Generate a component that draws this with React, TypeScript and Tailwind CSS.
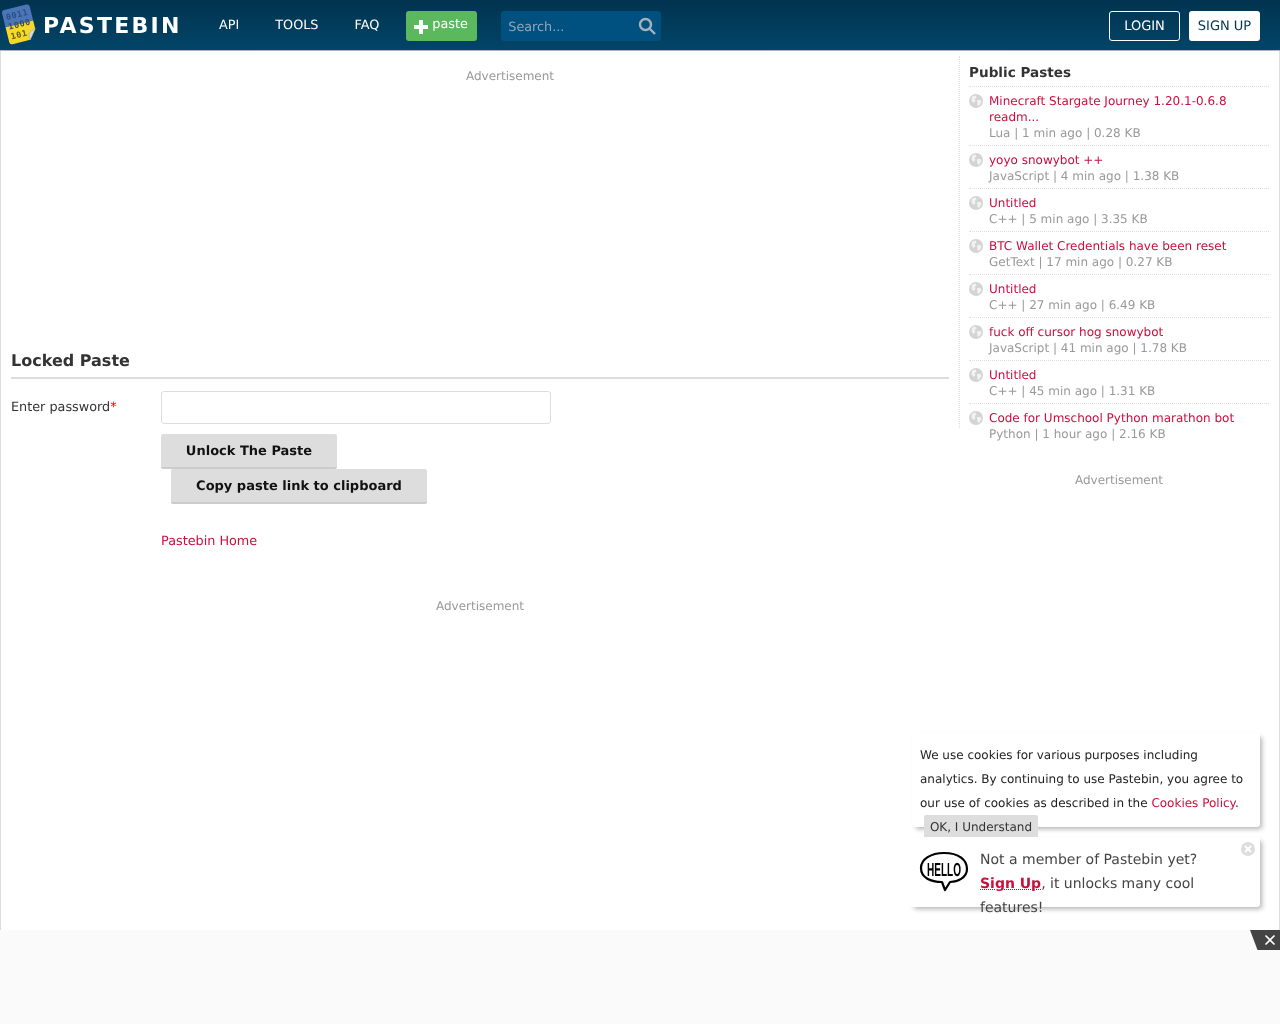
const pastes = [
  { t: "Minecraft Stargate Journey 1.20.1-0.6.8 readm...", m: "Lua | 1 min ago | 0.28 KB" },
  { t: "yoyo snowybot ++", m: "JavaScript | 4 min ago | 1.38 KB" },
  { t: "Untitled", m: "C++ | 5 min ago | 3.35 KB" },
  { t: "BTC Wallet Credentials have been reset", m: "GetText | 17 min ago | 0.27 KB" },
  { t: "Untitled", m: "C++ | 27 min ago | 6.49 KB" },
  { t: "fuck off cursor hog snowybot", m: "JavaScript | 41 min ago | 1.78 KB" },
  { t: "Untitled", m: "C++ | 45 min ago | 1.31 KB" },
  { t: "Code for Umschool Python marathon bot", m: "Python | 1 hour ago | 2.16 KB" },
];

function Logo() {
  return (
    <svg width="40" height="46" viewBox="0 0 40 46" className="shrink-0">
      <g transform="translate(-0.5 -1.5) rotate(-14 20 24) translate(1 1.5) scale(0.95)">
        <path d="M5 8 Q5 5 8 5 L32 5 Q35 5 35 8 L35 23 L5 23 Z" fill="#4a76b8" />
        <path d="M5 23 L35 23 L35 32 L27 42 L8 42 Q5 42 5 39 Z" fill="#f6d826" />
        <path d="M35 32 L27 42 Q25 33 35 32 Z" fill="#d8d8d8" stroke="#aaa" strokeWidth="0.6" />
        <text x="8" y="16" fontSize="9" fontWeight="700" fontFamily="'DejaVu Sans Mono', monospace" fill="#2c4d80" letterSpacing="0.6">0011</text>
        <text x="8" y="26.5" fontSize="9" fontWeight="700" fontFamily="'DejaVu Sans Mono', monospace" fill="#3a4a55" letterSpacing="0.6">1000</text>
        <text x="8" y="37" fontSize="9" fontWeight="700" fontFamily="'DejaVu Sans Mono', monospace" fill="#5a5a20" letterSpacing="0.6">101</text>
      </g>
    </svg>
  );
}

function Globe() {
  return (
    <svg width="14" height="14" viewBox="0 0 14 14" className="shrink-0 mt-[1px]">
      <circle cx="7" cy="7" r="7" fill="#d4d4d4" />
      <path d="M3 2.5 L6.5 1.5 L7.5 3.5 L5.5 5 L6.5 7 L4.5 9 L2.5 6.5 Z M8 6 L11.5 6 L12.5 8 L10 12 L8.5 11 Z" fill="#f2f2f2" />
    </svg>
  );
}

export default function App() {
  return (
    <div className="relative h-[1024px] overflow-hidden text-[12.8px] text-[#333] will-change-transform [text-rendering:geometricPrecision] font-['DejaVu_Sans',sans-serif]">
      <header className="flex h-[51px] items-start border-b border-[#aab4ba] bg-gradient-to-b from-[#02334f] to-[#024568]">
        <div className="flex items-center pt-[1px] w-[188px] h-[48px]">
          <Logo />
          <span className="ml-[3px] mt-[4px] text-[22px] font-bold tracking-[2.3px] text-white leading-none">PASTEBIN</span>
        </div>
        <nav className="flex ml-[31px] gap-[36px] pt-[17px] text-white leading-[18px]">
          <span>API</span>
          <span>TOOLS</span>
          <span>FAQ</span>
        </nav>
        <div className="ml-[27px] mt-[11px] flex h-[30px] w-[71px] items-start gap-[4px] rounded-[3px] bg-[#5cb85c] pl-[8px] pt-[5px] text-white leading-[18px]">
          <svg width="14" height="14" viewBox="0 0 14 14" className="mt-[4px]"><path d="M5 0h4v5h5v4H9v5H5V9H0V5h5z" fill="#fff" /></svg>
          <span>paste</span>
        </div>
        <div className="ml-[24px] mt-[11px] flex h-[30px] w-[160px] items-center justify-between rounded-[3px] bg-[#005180] pl-[7px] pr-[5px] text-[#8fa8bb]">
          <span className="mt-[3px]">Search...</span>
          <svg width="18" height="18" viewBox="0 0 18 18" fill="none" stroke="#a3b3be" strokeWidth="2.4"><circle cx="7.5" cy="7.5" r="5.5" /><path d="M11.5 11.5 L17 17" /></svg>
        </div>
        <div className="ml-auto mr-[20px] mt-[11px] flex gap-[9px] text-[13px]">
          <div className="flex h-[30px] w-[71px] items-center justify-center rounded-[3px] border border-white pt-[2px] text-white">LOGIN</div>
          <div className="flex h-[30px] w-[71px] items-center justify-center rounded-[3px] bg-white pt-[2px] text-[#02334f]">SIGN UP</div>
        </div>
      </header>

      <div className="flex h-[973px] border-x border-[#ddd] pt-[5px]">
        <main className="w-[958px] shrink-0 pl-[10px] pr-[10px]">
          <div className="h-[290px] pl-[60px] pt-[12px] text-center text-[12px] leading-[16px] text-[#999]">Advertisement</div>
          <h1 className="h-[28px] border-b-2 border-[#ddd] text-[16px] font-bold leading-[24px] text-[#333] pt-[3px] box-content pb-0">Locked Paste</h1>
          <div className="mt-[12px] flex">
            <label className="w-[150px] pt-[8px] leading-[18px]">Enter password<span className="text-[#f00]">*</span></label>
            <div>
              <div className="h-[33px] w-[390px] rounded-[3px] border border-[#ddd] bg-white" />
              <div className="mt-[10px] flex h-[35px] w-[176px] items-center justify-center rounded-[2px] border-b-2 border-[#ccc] bg-[#ddd] pt-[2px] text-[13px] font-bold text-[#111]">Unlock The Paste</div>
              <div className="ml-[10px] flex h-[35px] w-[256px] items-center justify-center rounded-[2px] border-b-2 border-[#ccc] bg-[#ddd] pt-[2px] text-[13px] font-bold text-[#111]">Copy paste link to clipboard</div>
              <div className="mt-[29px] leading-[18px] text-[#c8103e]">Pastebin Home</div>
            </div>
          </div>
          <div className="mt-[47px] text-center text-[12px] leading-[16px] text-[#999]">Advertisement</div>
        </main>

        <aside className="relative w-[320px] pl-[10px] pr-[10px]">
          <span className="absolute left-0 top-0 h-[372px] border-l border-dotted border-[#ddd]" />
          <h2 className="h-[31px] pt-[7px] border-b border-dotted border-[#ddd] text-[13.6px] font-bold leading-[20px] text-[#333]">Public Pastes</h2>
          <ul>
            {pastes.map((p, i) => (
              <li key={i} className={`flex gap-[6px] pt-[6px] pb-[4px] text-[12px] leading-[16px] ${i < 7 ? "border-b border-dotted border-[#ddd]" : ""}`}>
                <Globe />
                <div>
                  <div className="text-[#c8103e]">{p.t}</div>
                  <div className="text-[#999]">{p.m}</div>
                </div>
              </li>
            ))}
          </ul>
          <div className="mt-[26px] text-center text-[12px] leading-[16px] text-[#999]">Advertisement</div>
        </aside>
      </div>

      <div className="absolute left-[912px] top-[733px] h-[94px] w-[348px] rounded-[3px] bg-white pl-[8px] pr-[12px] pt-[10px] text-[12px] leading-[24px] text-[#222] shadow-[3px_3px_5px_-1px_rgba(0,0,0,0.3)]">
        We use cookies for various purposes including analytics. By continuing to use Pastebin, you agree to our use of cookies as described in the <span className="text-[#c8103e]">Cookies Policy</span>.
      </div>
      <div className="absolute left-[910px] top-[837px] flex h-[70px] w-[350px] rounded-[3px] bg-white pl-[10px] pt-[11px] text-[14px] leading-[24px] text-[#444] shadow-[3px_3px_5px_-1px_rgba(0,0,0,0.3)]">
        <svg width="50" height="42" viewBox="0 0 50 42" className="shrink-0 mt-[3px] -ml-[1px]">
          <path d="M25 2 C40 2 48 9 48 18 C48 27 38 31 31 31 L26 39 L23 31 C12 31 2 27 2 17 C2 8 12 2 25 2 Z" fill="#fff" stroke="#000" strokeWidth="2.2" strokeLinejoin="round" />
          <text x="25" y="24.5" textAnchor="middle" fontSize="19" fontWeight="700" fontFamily="'Liberation Sans Narrow','Liberation Sans',sans-serif" textLength="34" lengthAdjust="spacingAndGlyphs" fill="#000">HELLO</text>
        </svg>
        <div className="ml-[11px] w-[240px]">
          Not a member of Pastebin yet?<br />
          <span className="font-bold text-[#c8103e] underline decoration-dotted decoration-1">Sign Up</span>, it unlocks many cool features!
        </div>
        <span className="absolute right-[5px] top-[5px] flex h-[14px] w-[14px] items-center justify-center rounded-full bg-[#ddd]">
          <svg width="8" height="8" viewBox="0 0 8 8" stroke="#fff" strokeWidth="2"><path d="M1 1l6 6M7 1L1 7" /></svg>
        </span>
      </div>
      <div className="absolute left-[924px] top-[815px] flex h-[22px] w-[114px] items-center justify-center rounded-t-[2px] bg-[#ddd] pt-[1px] text-[12px] text-[#333]">OK, I Understand</div>

      <div className="absolute inset-x-0 bottom-0 h-[94px] bg-[#fafafa]" />
      <div className="absolute right-0 top-[930px] flex h-[20px] w-[30px] items-center justify-end bg-[#444] pr-[4px] [clip-path:polygon(0_0,100%_0,100%_100%,25%_100%)]">
        <svg width="12" height="12" viewBox="0 0 12 12" stroke="#fff" strokeWidth="1.6"><path d="M1.5 1.5l9 9M10.5 1.5l-9 9" /></svg>
      </div>
    </div>
  );
}
